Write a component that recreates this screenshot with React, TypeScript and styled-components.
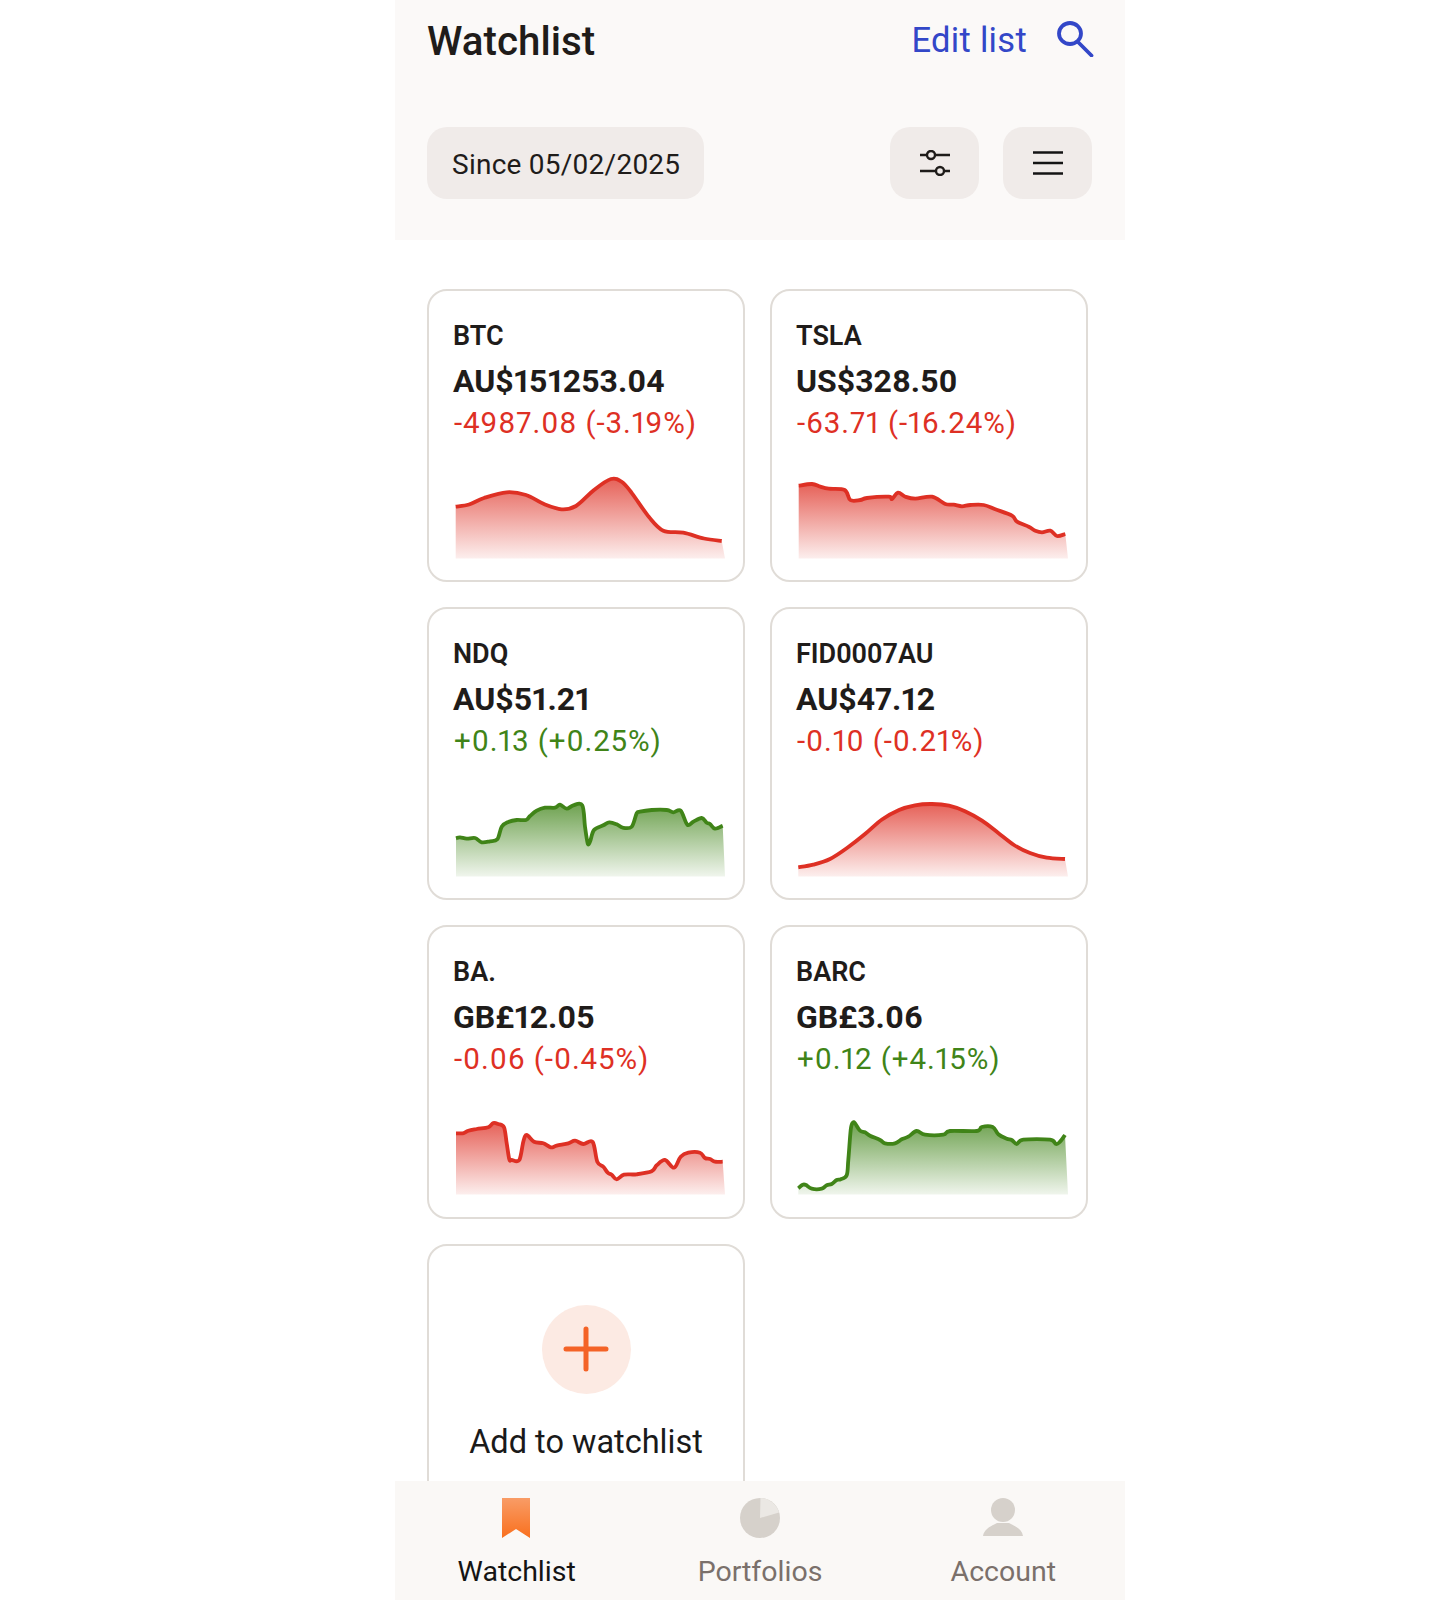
import styled, { createGlobalStyle } from "styled-components";

const GlobalStyle = createGlobalStyle`
    html, body {
        margin: 0;
        padding: 0;
        background: #ffffff;
        font-family: Roboto, "Liberation Sans", sans-serif;
    }
`;

const RED = "#DE3024";
const GREEN = "#408418";

const Phone = styled.div`
    width: 730px;
    height: 1600px;
    margin-left: 395px;
    display: flex;
    flex-direction: column;
    overflow: hidden;
    background: #ffffff;
`;

const Header = styled.header`
    height: 240px;
    flex: none;
    box-sizing: border-box;
    padding: 16px 33px 0 32px;
    background: #fbf9f8;
`;

const TitleRow = styled.div`
    display: flex;
    align-items: center;
    height: 50px;
`;

const Title = styled.h1`
    margin: 0;
    flex: 1;
    font-size: 40.3px;
    line-height: 50px;
    font-weight: 500;
    color: #1f1c1a;
    padding-top: 1px;
`;

const EditLink = styled.span`
    font-size: 34.5px;
    line-height: 50px;
    letter-spacing: 0.3px;
    color: #3347c8;
    margin-right: 30px;
    margin-bottom: 2px;
`;

const SearchIcon = styled.svg`
    display: block;
    margin: 0 -2px 5px 0;
`;

const ToolRow = styled.div`
    display: flex;
    align-items: center;
    margin-top: 61px;
`;

const DatePill = styled.div`
    width: 277px;
    height: 72px;
    box-sizing: border-box;
    padding: 2px 0 0 25px;
    display: flex;
    align-items: center;
    border-radius: 20px;
    background: #f0ebe9;
    font-size: 28px;
    letter-spacing: 0.25px;
    color: #1f1c1a;
    margin-right: auto;
`;

const IconButton = styled.div`
    width: 89px;
    height: 72px;
    display: flex;
    align-items: center;
    justify-content: center;
    border-radius: 20px;
    background: #f0ebe9;
    margin-left: 24px;
`;

const Content = styled.main`
    flex: 1;
    min-height: 0;
    overflow: hidden;
    padding: 49px 0 0 32px;
`;

const CardGrid = styled.div`
    display: grid;
    grid-template-columns: 318px 318px;
    grid-auto-rows: 293.2px;
    column-gap: 25px;
    row-gap: 25px;
`;

const Card = styled.div`
    box-sizing: border-box;
    border: 2px solid #e0dcd7;
    border-radius: 20px;
    background: #ffffff;
    padding: 28px 0 0 24px;
`;

const Ticker = styled.div`
    font-size: 27px;
    line-height: 34px;
    font-weight: 600;
    color: #1f1c1a;
`;

const Price = styled.div`
    margin-top: 7px;
    font-size: 32px;
    line-height: 42px;
    font-weight: 700;
    font-variant-numeric: proportional-nums;
    color: #1f1c1a;
`;

const Change = styled.div<{ $up: boolean }>`
    margin-left: 1px;
    font-size: 29.5px;
    line-height: 42px;
    letter-spacing: 0.9px;
    font-variant-numeric: proportional-nums;
    color: ${(p) => (p.$up ? GREEN : RED)};
`;

const ChartBox = styled.svg`
    display: block;
    margin: 26px 0 0 1px;
    width: 272px;
    height: 90px;
`;

const AddCard = styled(Card)`
    padding: 59px 0 0;
    display: flex;
    flex-direction: column;
    align-items: center;
`;

const AddCircle = styled.div`
    width: 89px;
    height: 89px;
    display: flex;
    align-items: center;
    justify-content: center;
    border-radius: 50%;
    background: #fceae3;
`;

const AddLabel = styled.div`
    margin-top: 26px;
    font-size: 32.5px;
    line-height: 44px;
    color: #1a1a1a;
`;

const BottomNav = styled.nav`
    height: 119px;
    flex: none;
    display: grid;
    grid-template-columns: repeat(3, 1fr);
    background: #faf8f6;
`;

const NavItem = styled.div<{ $active?: boolean }>`
    display: flex;
    flex-direction: column;
    align-items: center;
    padding-top: 16px;
    font-size: 28.5px;
    line-height: 36px;
    color: ${(p) => (p.$active ? "#141414" : "#7a706b")};
`;

const NavIcon = styled.svg`
    display: block;
    width: 44px;
    height: 42px;
    margin-bottom: 15px;
`;

// catmull-rom through the sampled points, so the lines stay soft like the original
function toPath(points: number[][]) {
    let d = `M${points[0][0]} ${points[0][1]}`;
    for (let i = 0; i < points.length - 1; i++) {
        const p0 = points[Math.max(i - 1, 0)];
        const p1 = points[i];
        const p2 = points[i + 1];
        const p3 = points[Math.min(i + 2, points.length - 1)];
        const c1x = p1[0] + (p2[0] - p0[0]) / 6;
        const c1y = p1[1] + (p2[1] - p0[1]) / 6;
        const c2x = p2[0] - (p3[0] - p1[0]) / 6;
        const c2y = p2[1] - (p3[1] - p1[1]) / 6;
        d += ` C${c1x.toFixed(1)} ${c1y.toFixed(1)} ${c2x.toFixed(1)} ${c2y.toFixed(1)} ${p2[0]} ${p2[1]}`;
    }
    return d;
}

function Sparkline({ id, up, points }: { id: string; up: boolean; points: number[][] }) {
    const color = up ? GREEN : RED;
    const line = toPath(points);
    const first = points[0];
    return (
        <ChartBox viewBox="0 0 272 90">
            <defs>
                <linearGradient id={id} x1="0" y1="0" x2="0" y2="1">
                    <stop offset="0" stopColor={color} stopOpacity="0.76" />
                    <stop offset="1" stopColor={color} stopOpacity="0.08" />
                </linearGradient>
            </defs>
            <path d={`${line} L271 88.5 L${first[0]} 88.5 Z`} fill={`url(#${id})`} />
            <path d={line} fill="none" stroke={color} strokeWidth="3.8" strokeLinejoin="round" />
        </ChartBox>
    );
}

const stocks = [
    {
        ticker: "BTC",
        price: "AU$151253.04",
        change: "-4987.08 (-3.19%)",
        up: false,
        points: [[1.7, 36.7], [15, 34.5], [30, 28], [52.7, 22.3], [72, 25], [90, 34], [107.7, 39.3], [122, 36], [140, 20], [157, 9], [168, 12], [178, 23.3], [195, 47], [209.3, 60.7], [229.3, 62.7], [250, 68.5], [267.7, 71]],
    },
    {
        ticker: "TSLA",
        price: "US$328.50",
        change: "-63.71 (-16.24%)",
        up: false,
        points: [[1.7, 15.7], [15, 14], [23.3, 16.7], [31.7, 18.7], [47.7, 20], [53.3, 30], [63.3, 30], [70, 28], [91.7, 26.7], [95, 29], [101, 22.7], [108.3, 26.7], [118.3, 28.7], [135, 26.7], [148.3, 34], [156.7, 34.7], [165, 36.3], [173.3, 35], [186.7, 35], [198.3, 39.3], [215, 45.7], [220, 51.7], [231.7, 56.7], [238.3, 60.7], [245, 62.3], [253.3, 60.7], [260, 66], [268.3, 64]],
    },
    {
        ticker: "NDQ",
        price: "AU$51.21",
        change: "+0.13 (+0.25%)",
        up: true,
        points: [[2, 50.3], [6, 49.3], [12.7, 50.7], [21, 50], [27.7, 54.3], [36, 53.3], [43.3, 51.3], [47.7, 38.7], [54.3, 34], [62.7, 32], [72, 32], [76, 28], [82.7, 22.7], [91, 19.7], [101, 19.7], [106, 16.7], [112.7, 20.7], [119.3, 17.3], [128.3, 17.3], [131, 38.7], [133.7, 55.3], [136, 53.7], [140, 42], [149.3, 37.3], [155.3, 34.3], [162.7, 36.3], [168.7, 39.7], [177.7, 38.7], [182.7, 25.3], [186, 23.7], [197.7, 22], [212.7, 22], [219.3, 24.3], [226.7, 22.7], [233.3, 36.7], [239.3, 33.7], [247.7, 30], [252.7, 34.7], [256, 36], [261, 40.7], [268.7, 37.7]],
    },
    {
        ticker: "FID0007AU",
        price: "AU$47.12",
        change: "-0.10 (-0.21%)",
        up: false,
        points: [[1.3, 79.3], [16.3, 76.7], [33, 71], [50, 60], [68, 46], [85, 31.5], [102, 22], [118, 17.3], [135, 16], [152, 17.7], [168, 23.3], [185, 32.7], [201, 44.7], [217, 57], [233, 65], [249.7, 69.7], [268, 71]],
    },
    {
        ticker: "BA.",
        price: "GB£12.05",
        change: "-0.06 (-0.45%)",
        up: false,
        points: [[2, 27.3], [8.7, 27.3], [14.3, 24.7], [22.7, 23], [34.3, 21.3], [39.3, 17], [44.3, 18], [50, 21.3], [52.7, 37.3], [55.3, 53.3], [57.7, 54], [65.3, 54], [69.3, 35.7], [72.7, 29], [80, 35.7], [89.3, 37.3], [96.7, 41.3], [102.7, 39.7], [114.3, 37.3], [121, 34.7], [129.3, 38], [138.7, 36], [143.3, 55.7], [149.3, 60.7], [153.7, 66.7], [157.7, 68.7], [162.7, 73.3], [170, 68.7], [182.7, 68.3], [197.7, 65.3], [202.7, 59.3], [211, 54], [220, 61.7], [226.7, 50.7], [234.3, 46.7], [246, 46.7], [251, 52], [256, 53], [261, 55.7], [268.7, 55.7]],
    },
    {
        ticker: "BARC",
        price: "GB£3.06",
        change: "+0.12 (+4.15%)",
        up: true,
        points: [[1.3, 82.3], [5.7, 78.7], [9, 79], [14.7, 82.7], [24.7, 82.7], [29.7, 79.3], [34.7, 78], [39.7, 74], [43.7, 73.3], [49.7, 69.3], [51.3, 54], [53.7, 24], [55.7, 16.7], [58, 17.3], [63, 24.7], [68, 26.3], [73, 29.7], [83, 34], [88, 37.3], [98, 37.3], [104.7, 33.3], [111.3, 30.7], [119.7, 25], [128, 28.7], [146.3, 28.7], [153, 25], [179.7, 25], [184.7, 21], [195.7, 21], [201.3, 28.3], [209.7, 32.7], [214.7, 34], [219.7, 38], [226.3, 33.7], [253, 33.7], [259, 38], [263, 35.7], [268, 29]],
    },
];

export default function App() {
    return (
        <>
            <GlobalStyle />
            <Phone>
                <Header>
                    <TitleRow>
                        <Title>Watchlist</Title>
                        <EditLink>Edit list</EditLink>
                        <SearchIcon width="37" height="36" viewBox="0 0 37 36" fill="none" stroke="#3347c8" strokeWidth="3.8">
                            <ellipse cx="13" cy="12.5" rx="11" ry="10.5" />
                            <path d="M21 21 L34.5 34.5" strokeLinecap="round" />
                        </SearchIcon>
                    </TitleRow>
                    <ToolRow>
                        <DatePill>Since 05/02/2025</DatePill>
                        <IconButton>
                            <svg width="32" height="26" viewBox="0 0 32 26" fill="none" stroke="#1f1c1a" strokeWidth="2.4">
                                <path d="M1 5 H8 M16 5 H31 M1 21 H17 M25 21 H31" />
                                <circle cx="12" cy="5" r="4" />
                                <circle cx="21" cy="21" r="4" />
                            </svg>
                        </IconButton>
                        <IconButton>
                            <svg width="30" height="24" viewBox="0 0 30 24" fill="none" stroke="#141414" strokeWidth="2.6">
                                <path d="M0 1.5 H30 M0 12 H30 M0 22.5 H30" />
                            </svg>
                        </IconButton>
                    </ToolRow>
                </Header>
                <Content>
                    <CardGrid>
                        {stocks.map((s) => (
                            <Card key={s.ticker}>
                                <Ticker>{s.ticker}</Ticker>
                                <Price>{s.price}</Price>
                                <Change $up={s.up}>{s.change}</Change>
                                <Sparkline id={`fill-${s.ticker.replace(".", "")}`} up={s.up} points={s.points} />
                            </Card>
                        ))}
                        <AddCard>
                            <AddCircle>
                                <svg width="46" height="46" viewBox="0 0 46 46" fill="none" stroke="#f46327" strokeWidth="5" strokeLinecap="round">
                                    <path d="M23 3 V43 M3 23 H43" />
                                </svg>
                            </AddCircle>
                            <AddLabel>Add to watchlist</AddLabel>
                        </AddCard>
                    </CardGrid>
                </Content>
                <BottomNav>
                    <NavItem $active>
                        <NavIcon viewBox="0 0 44 42">
                            <defs>
                                <linearGradient id="bookmark" x1="0" y1="0" x2="0" y2="1">
                                    <stop offset="0" stopColor="#f99c66" />
                                    <stop offset="1" stopColor="#f9701e" />
                                </linearGradient>
                            </defs>
                            <path d="M7 1 H35 V41 L21 32 L7 41 Z" fill="url(#bookmark)" />
                        </NavIcon>
                        Watchlist
                    </NavItem>
                    <NavItem>
                        <NavIcon viewBox="0 0 44 42">
                            <circle cx="22" cy="21" r="20" fill="#d6d1cb" />
                            <path d="M22 21 L22.5 1 A20 20 0 0 1 41 15.5 Z" fill="#ebe8e4" />
                        </NavIcon>
                        Portfolios
                    </NavItem>
                    <NavItem>
                        <NavIcon viewBox="0 0 44 42">
                            <ellipse cx="22" cy="13" rx="12" ry="12" fill="#d6d1cb" />
                            <path d="M2 39 C3 32 10 29 16 26 H28 C34 29 41 32 42 39 Z" fill="#d6d1cb" />
                        </NavIcon>
                        Account
                    </NavItem>
                </BottomNav>
            </Phone>
        </>
    );
}
